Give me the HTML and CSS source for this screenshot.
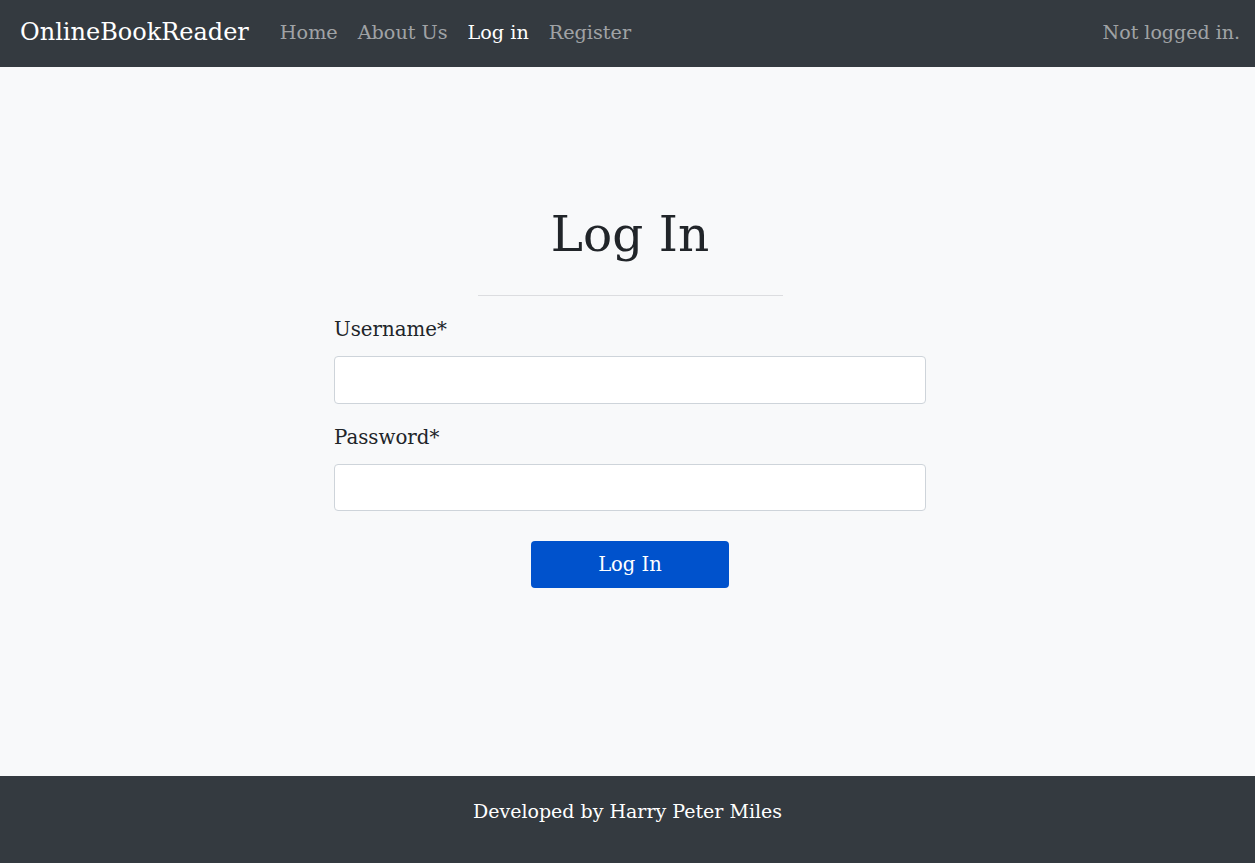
FILE: index.html
```html
<!DOCTYPE html>
<html lang="en">
<head>
<meta charset="utf-8">
<title>Log In - OnlineBookReader</title>
<link rel="stylesheet" href="styles.css">
</head>
<body>
<div class="page">
  <nav class="navbar">
    <a class="brand" href="#">OnlineBookReader</a>
    <ul class="nav-links">
      <li><a href="#">Home</a></li>
      <li><a href="#">About Us</a></li>
      <li><a class="active" href="#">Log in</a></li>
      <li><a href="#">Register</a></li>
    </ul>
    <span class="status">Not logged in.</span>
  </nav>
  <main class="main">
    <h1 class="title">Log In</h1>
    <hr class="divider">
    <form class="form">
      <label class="label" for="u">Username*</label>
      <input class="input" id="u" type="text">
      <label class="label" for="p">Password*</label>
      <input class="input" id="p" type="password">
      <div class="actions"><button class="btn" type="button">Log In</button></div>
    </form>
  </main>
  <footer class="footer">Developed by Harry Peter Miles</footer>
</div>
</body>
</html>
```

FILE: styles.css
```css
* { box-sizing: border-box; }
html, body { margin: 0; padding: 0; height: 100%; }
body {
  background: #f8f9fa;
  color: #212529;
  font-family: "DejaVu Serif", serif;
  font-size: 17px;
}
.page { display: flex; flex-direction: column; min-height: 100%; }
.navbar {
  background: #343a40;
  height: 67px;
  display: flex;
  align-items: center;
  padding: 0 15px 3px 20px;
}
.brand {
  color: #fff;
  text-decoration: none;
  font-size: 24px;
  margin-right: 21px;
}
.nav-links { list-style: none; margin: 0; padding: 0; display: flex; flex: 1; }
.nav-links a {
  display: block;
  color: rgba(255,255,255,0.55);
  text-decoration: none;
  font-size: 19.2px;
  padding: 0 10px;
}
.nav-links a.active { color: #fff; }
.status { color: rgba(255,255,255,0.55); font-size: 19px; }
.main {
  flex: 1;
  display: flex;
  flex-direction: column;
  align-items: center;
  padding: 138px 0 0 5px;
}
.title { font-weight: 400; font-size: 48.5px; margin: 0; line-height: 1.2; }
.divider { width: 305px; border: 0; border-top: 1px solid #dcdde0; margin: 32px 0 22px; }
.form { width: 592px; display: flex; flex-direction: column; }
.label { font-size: 19.8px; margin-bottom: 14px; line-height: 1.2; }
.input {
  height: 48px;
  border: 1px solid #ced4da;
  border-radius: 4px;
  background: #fff;
  margin-bottom: 22px;
  font: inherit;
  padding: 6px 12px;
}
.input + .label + .input { height: 47px; }
.actions { display: flex; justify-content: center; margin-top: 8px; }
.btn {
  width: 198px; height: 47px;
  background: #0052cc;
  color: #fff;
  border: 0;
  border-radius: 4px;
  font: inherit;
  font-size: 19.5px;
}
.footer {
  background: #343a40;
  color: #fff;
  height: 87px;
  display: flex;
  justify-content: center;
  align-items: center;
  font-size: 19px;
  padding-bottom: 18px;
}
```
